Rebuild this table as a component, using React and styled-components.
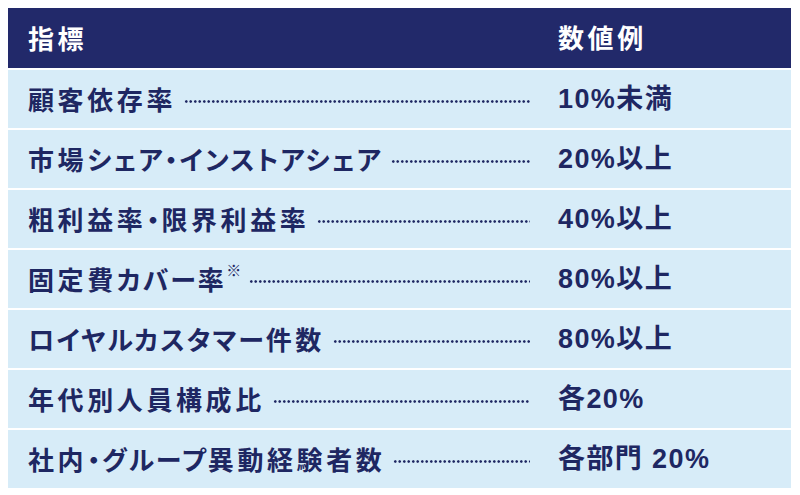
import React from "react";
import styled, { createGlobalStyle } from "styled-components";

const GlobalStyle = createGlobalStyle`
  html, body {
    margin: 0;
    padding: 0;
    background: #ffffff;
  }
  body {
    font-family: "Noto Sans CJK JP", "Noto Sans", sans-serif;
  }
`;

const Page = styled.div`
  width: 800px;
  height: 495px;
  padding: 8px 9px 0 8px;
  box-sizing: border-box;
`;

const Table = styled.div`
  display: flex;
  flex-direction: column;
  gap: 2px;
`;

const HeaderRow = styled.div`
  display: flex;
  align-items: center;
  height: 60px;
  background: #22296a;
  color: #ffffff;
`;

const Row = styled.div`
  display: flex;
  align-items: center;
  height: 58px;
  background: #d7ecf8;
  color: #1e2762;
`;

const LabelCell = styled.div`
  flex: 1;
  display: flex;
  align-items: center;
  padding: 0 28px 0 20px;
  min-width: 0;
`;

const ValueCell = styled.div`
  width: 233px;
  flex: none;
`;

const Text = styled.span`
  font-size: ${(p) => (p.$num ? "27px" : "26px")};
  font-weight: 700;
  letter-spacing: ${(p) => (p.$num ? "1.4px" : "3.6px")};
  font-feature-settings: "palt";
  white-space: nowrap;
  line-height: 1;
  font-family: ${(p) =>
    p.$num
      ? '"Liberation Sans", "Noto Sans CJK JP", sans-serif'
      : '"Noto Sans CJK JP", sans-serif'};
`;

const Kana = styled.span`
  letter-spacing: 2px;
`;

const Note = styled.sup`
  font-size: 15px;
  font-weight: 700;
  letter-spacing: 0;
  position: relative;
  top: -4px;
  margin-left: -1px;
`;

const Leader = styled.span`
  flex: 1;
  height: 3px;
  margin-left: 8px;
  margin-top: 4px;
  background-image: radial-gradient(circle, #1e2762 1.15px, transparent 1.45px);
  background-size: 4.5px 3px;
  background-repeat: repeat-x;
`;

const rows = [
  { label: "顧客依存率", value: "10%未満" },
  { label: "市場シェア・インストアシェア", value: "20%以上" },
  { label: "粗利益率・限界利益率", value: "40%以上" },
  { label: "固定費カバー率", note: true, value: "80%以上" },
  { label: "ロイヤルカスタマー件数", value: "80%以上" },
  { label: "年代別人員構成比", value: "各20%" },
  { label: "社内・グループ異動経験者数", value: "各部門 20%" },
];

// katakana runs are set a little tighter than kanji
const splitKana = (label) =>
  label.split(/([\u30a0-\u30ff]+)/).filter(Boolean).map((part, i) =>
    /^[\u30a0-\u30ff]+$/.test(part) ? <Kana key={i}>{part}</Kana> : part
  );

export default function App() {
  return (
    <>
      <GlobalStyle />
      <Page>
        <Table>
          <HeaderRow>
            <LabelCell>
              <Text>指標</Text>
            </LabelCell>
            <ValueCell>
              <Text>数値例</Text>
            </ValueCell>
          </HeaderRow>
          {rows.map((r) => (
            <Row key={r.label}>
              <LabelCell>
                <Text>
                  {splitKana(r.label)}
                  {r.note && <Note>※</Note>}
                </Text>
                <Leader />
              </LabelCell>
              <ValueCell>
                <Text $num>{r.value}</Text>
              </ValueCell>
            </Row>
          ))}
        </Table>
      </Page>
    </>
  );
}
